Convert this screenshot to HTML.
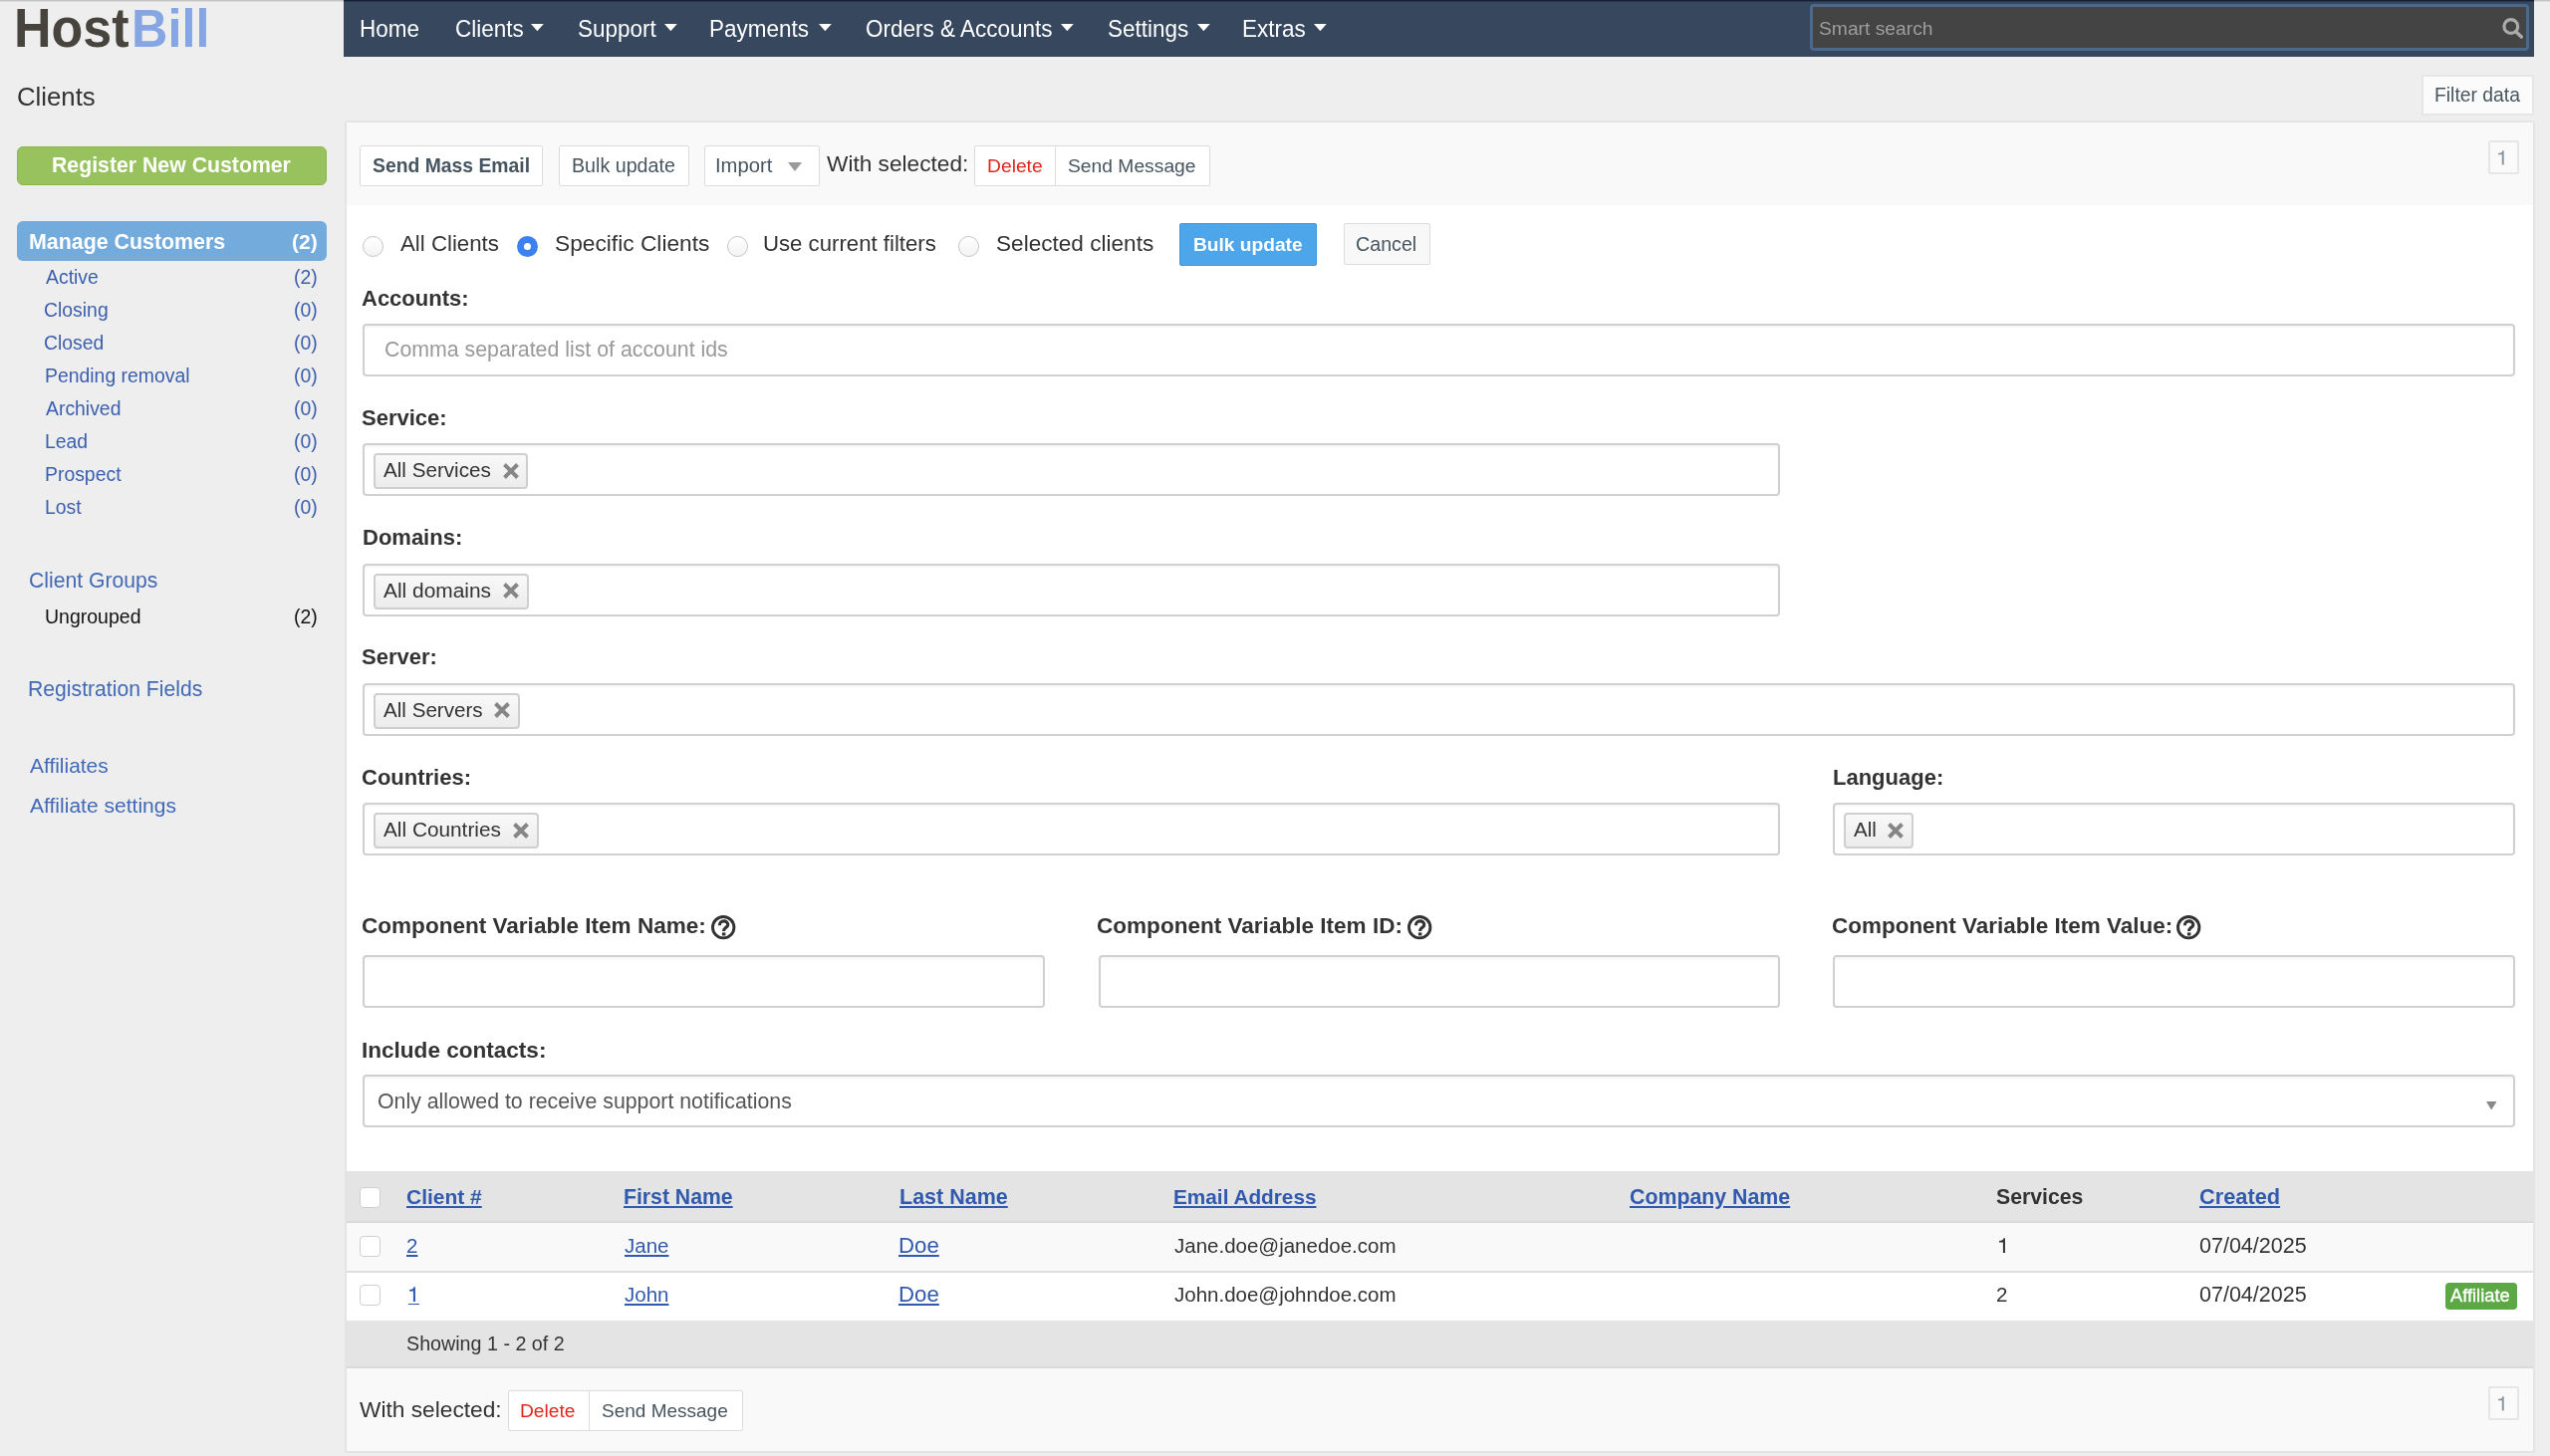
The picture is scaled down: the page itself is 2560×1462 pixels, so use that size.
<!DOCTYPE html>
<html><head><meta charset="utf-8"><title>HostBill - Clients</title>
<style>
html,body{margin:0;padding:0;}
body{width:2560px;height:1462px;position:relative;overflow:hidden;background:#eeeeee;font-family:"Liberation Sans",sans-serif;}
.t{position:absolute;white-space:nowrap;font-family:"Liberation Sans",sans-serif;will-change:transform;}
.u{text-decoration:underline;text-decoration-thickness:2px;text-underline-offset:2px;}
.btn{position:absolute;box-sizing:border-box;background:#fff;border:1px solid #dcdcdc;border-radius:2px;}
.inp{position:absolute;box-sizing:border-box;background:#fff;border:2px solid #d0d0d0;border-radius:4px;box-shadow:inset 0 2px 2px rgba(0,0,0,0.04);}
.tag{position:absolute;box-sizing:border-box;border:2px solid #cfcfcf;border-radius:4px;background:linear-gradient(#f9f9f9,#ececec);}
.radio{position:absolute;box-sizing:border-box;width:21px;height:21px;border-radius:50%;border:1px solid #c4c4c4;background:linear-gradient(#ffffff,#f3f3f3);}
.chk{position:absolute;box-sizing:border-box;width:21px;height:21px;border-radius:4px;border:1px solid #cfcfcf;background:#fff;}

</style></head>
<body>
<div style="position:absolute;left:0px;top:0px;width:2560px;height:1px;background:#c2c2c2;"></div>
<div style="position:absolute;left:0px;top:1px;width:2560px;height:1px;background:#dcdcdc;"></div>
<div style="position:absolute;left:345px;top:0px;width:2199px;height:57px;background:#36475e;"></div>
<div style="position:absolute;left:345px;top:0px;width:2199px;height:1px;background:#142139;"></div>
<div style="position:absolute;left:345px;top:1px;width:2199px;height:1px;background:#27364c;"></div>
<svg style="position:absolute;left:533.0px;top:23.8px" width="13" height="7.2" viewBox="0 0 13 7.2"><path d="M0 0H12.8L6.4 7.2Z" fill="#fff"/></svg>
<svg style="position:absolute;left:667.0px;top:23.8px" width="13" height="7.2" viewBox="0 0 13 7.2"><path d="M0 0H12.8L6.4 7.2Z" fill="#fff"/></svg>
<svg style="position:absolute;left:821.5px;top:23.8px" width="13" height="7.2" viewBox="0 0 13 7.2"><path d="M0 0H12.8L6.4 7.2Z" fill="#fff"/></svg>
<svg style="position:absolute;left:1064.8px;top:23.8px" width="13" height="7.2" viewBox="0 0 13 7.2"><path d="M0 0H12.8L6.4 7.2Z" fill="#fff"/></svg>
<svg style="position:absolute;left:1202.2px;top:23.8px" width="13" height="7.2" viewBox="0 0 13 7.2"><path d="M0 0H12.8L6.4 7.2Z" fill="#fff"/></svg>
<svg style="position:absolute;left:1319.3999999999999px;top:23.8px" width="13" height="7.2" viewBox="0 0 13 7.2"><path d="M0 0H12.8L6.4 7.2Z" fill="#fff"/></svg>
<div style="position:absolute;left:1817px;top:4px;width:722px;height:47px;box-sizing:border-box;background:#444444;border:3.5px solid #4a698b;border-radius:4px;"></div>
<svg style="position:absolute;left:2508px;top:14px" width="28" height="28" viewBox="0 0 28 28"><circle cx="12.8" cy="12.5" r="6.9" fill="none" stroke="#ababab" stroke-width="3.2"/><line x1="18" y1="18" x2="23.3" y2="23" stroke="#ababab" stroke-width="3.4" stroke-linecap="round"/></svg>
<div style="position:absolute;left:17px;top:147px;width:311px;height:38.5px;box-sizing:border-box;background:#98c25e;border:1px solid #8ab651;border-radius:6px;"></div>
<div style="position:absolute;left:17px;top:222px;width:311px;height:40px;background:#73abdd;border-radius:6px;"></div>
<div class="btn" style="left:2431px;top:74.5px;width:113px;height:41px;background:#fbfbfb;border:2px solid #e6e6e6;border-radius:2px;"></div>
<div style="position:absolute;left:346px;top:121px;width:2199px;height:1338px;box-sizing:border-box;background:#ffffff;border:2px solid #e4e4e4;border-radius:3px;"></div>
<div style="position:absolute;left:348px;top:123px;width:2195px;height:83px;background:#f9f9f9;"></div>
<div class="btn" style="left:361px;top:146px;width:184px;height:41px;"></div>
<div class="btn" style="left:560.5px;top:146px;width:131px;height:41px;"></div>
<div class="btn" style="left:707px;top:146px;width:116px;height:41px;"></div>
<div style="position:absolute;left:791px;top:163px;width:0;height:0;border-left:7px solid transparent;border-right:7px solid transparent;border-top:9px solid #9a9a9a;"></div>
<div class="btn" style="left:978px;top:146px;width:82px;height:41px;border-radius:2px 0 0 2px;"></div>
<div class="btn" style="left:1059px;top:146px;width:156px;height:41px;border-radius:0 2px 2px 0;"></div>
<div class="btn" style="left:2497.5px;top:141px;width:31px;height:34px;border:2px solid #e6e6e6;border-radius:2px;background:#fafafa;"></div>
<svg style="position:absolute;left:2508.4px;top:149.544px;overflow:visible" width="7.728" height="15.456" viewBox="0 -16 8 16"><path d="M3.9 0H5.95V-14.8H4.45C4.15 -12.9 2.7 -12.1 0 -12.1V-10.45H3.9Z" fill="#8a959e"/></svg>
<div class="radio" style="left:364px;top:237px;"></div>
<div class="radio" style="left:730.4px;top:237px;"></div>
<div class="radio" style="left:962.4px;top:237px;"></div>
<div class="radio" style="left:519px;top:237px;border:none;background:#3b82f0;"><div style="position:absolute;left:7px;top:7px;width:7px;height:7px;border-radius:50%;background:#fff;"></div></div>
<div style="position:absolute;left:1184px;top:224px;width:137.5px;height:42.5px;box-sizing:border-box;background:#4ea6ea;border:1px solid #3f97dc;border-radius:2px;"></div>
<div class="btn" style="left:1348.5px;top:224px;width:87px;height:42px;background:#f8f8f8;"></div>
<div class="inp" style="left:364px;top:325px;width:2161px;height:53px;"></div>
<div class="inp" style="left:364px;top:445px;width:1422.5px;height:53px;"></div>
<div class="tag" style="left:375px;top:455px;width:155.39999999999998px;height:36px;"></div>
<svg style="position:absolute;left:504.59999999999997px;top:464.8px" width="16" height="16" viewBox="0 0 16 16"><path d="M1.5 1.5L14.5 14.5M14.5 1.5L1.5 14.5" stroke="#868686" stroke-width="4" stroke-linecap="butt"/></svg>
<div class="inp" style="left:364px;top:565.5px;width:1422.5px;height:53px;"></div>
<div class="tag" style="left:375px;top:575.5px;width:156.20000000000005px;height:36px;"></div>
<svg style="position:absolute;left:505.40000000000003px;top:585.3px" width="16" height="16" viewBox="0 0 16 16"><path d="M1.5 1.5L14.5 14.5M14.5 1.5L1.5 14.5" stroke="#868686" stroke-width="4" stroke-linecap="butt"/></svg>
<div class="inp" style="left:364px;top:685.5px;width:2161px;height:53px;"></div>
<div class="tag" style="left:375px;top:695.5px;width:146.60000000000002px;height:36px;"></div>
<svg style="position:absolute;left:495.8px;top:705.3px" width="16" height="16" viewBox="0 0 16 16"><path d="M1.5 1.5L14.5 14.5M14.5 1.5L1.5 14.5" stroke="#868686" stroke-width="4" stroke-linecap="butt"/></svg>
<div class="inp" style="left:364px;top:806px;width:1422.5px;height:53px;"></div>
<div class="tag" style="left:375px;top:816px;width:165.89999999999998px;height:36px;"></div>
<svg style="position:absolute;left:515.1px;top:825.8px" width="16" height="16" viewBox="0 0 16 16"><path d="M1.5 1.5L14.5 14.5M14.5 1.5L1.5 14.5" stroke="#868686" stroke-width="4" stroke-linecap="butt"/></svg>
<div class="inp" style="left:1840px;top:806px;width:685px;height:53px;"></div>
<div class="tag" style="left:1851px;top:816px;width:70px;height:36px;"></div>
<svg style="position:absolute;left:1895.2px;top:825.8px" width="16" height="16" viewBox="0 0 16 16"><path d="M1.5 1.5L14.5 14.5M14.5 1.5L1.5 14.5" stroke="#868686" stroke-width="4" stroke-linecap="butt"/></svg>
<svg style="position:absolute;left:714px;top:918.5px" width="25" height="25" viewBox="0 0 25 25"><circle cx="12.2" cy="12.2" r="10.7" fill="none" stroke="#333" stroke-width="2.9"/><path d="M8.4 10.2C8.4 7.4 10.2 5.9 12.6 5.9C15 5.9 16.8 7.3 16.8 9.4C16.8 11.4 15.2 12 14 12.9C13 13.6 12.6 14.3 12.6 15.9" fill="none" stroke="#333" stroke-width="3.1"/><rect x="10.9" y="17.4" width="3.5" height="3.1" fill="#333"/></svg>
<svg style="position:absolute;left:1412.5px;top:918.5px" width="25" height="25" viewBox="0 0 25 25"><circle cx="12.2" cy="12.2" r="10.7" fill="none" stroke="#333" stroke-width="2.9"/><path d="M8.4 10.2C8.4 7.4 10.2 5.9 12.6 5.9C15 5.9 16.8 7.3 16.8 9.4C16.8 11.4 15.2 12 14 12.9C13 13.6 12.6 14.3 12.6 15.9" fill="none" stroke="#333" stroke-width="3.1"/><rect x="10.9" y="17.4" width="3.5" height="3.1" fill="#333"/></svg>
<svg style="position:absolute;left:2184.5px;top:918.5px" width="25" height="25" viewBox="0 0 25 25"><circle cx="12.2" cy="12.2" r="10.7" fill="none" stroke="#333" stroke-width="2.9"/><path d="M8.4 10.2C8.4 7.4 10.2 5.9 12.6 5.9C15 5.9 16.8 7.3 16.8 9.4C16.8 11.4 15.2 12 14 12.9C13 13.6 12.6 14.3 12.6 15.9" fill="none" stroke="#333" stroke-width="3.1"/><rect x="10.9" y="17.4" width="3.5" height="3.1" fill="#333"/></svg>
<div class="inp" style="left:364px;top:959px;width:685px;height:53px;"></div>
<div class="inp" style="left:1102.5px;top:959px;width:684px;height:53px;"></div>
<div class="inp" style="left:1840px;top:959px;width:685px;height:53px;"></div>
<div class="inp" style="left:364px;top:1079px;width:2161px;height:53px;"></div>
<svg style="position:absolute;left:2495.5px;top:1105.5px" width="10.5" height="8.6" viewBox="0 0 10.5 8.6"><path d="M0 0H10.4L5.2 8.6Z" fill="#888"/></svg>
<div style="position:absolute;left:348px;top:1176px;width:2195px;height:50px;background:#e4e4e4;"></div>
<div style="position:absolute;left:348px;top:1226px;width:2195px;height:2px;background:#d9d9d9;"></div>
<div style="position:absolute;left:348px;top:1228px;width:2195px;height:48px;background:#f9f9f9;"></div>
<div style="position:absolute;left:348px;top:1276px;width:2195px;height:1.5px;background:#dedede;"></div>
<div style="position:absolute;left:348px;top:1277.5px;width:2195px;height:48.0px;background:#ffffff;"></div>
<div style="position:absolute;left:348px;top:1325.5px;width:2195px;height:47.5px;background:#e4e4e4;"></div>
<div style="position:absolute;left:348px;top:1372px;width:2195px;height:2px;background:#dadada;"></div>
<div style="position:absolute;left:348px;top:1374px;width:2195px;height:83px;background:#f9f9f9;"></div>
<div class="chk" style="left:361px;top:1192px;"></div>
<div class="chk" style="left:361px;top:1241px;"></div>
<div class="chk" style="left:361px;top:1289.5px;"></div>
<svg style="position:absolute;left:2006.8px;top:1242.1px;overflow:visible" width="8.0" height="16.0" viewBox="0 -16 8 16"><path d="M3.9 0H5.95V-14.8H4.45C4.15 -12.9 2.7 -12.1 0 -12.1V-10.45H3.9Z" fill="#333333"/></svg>
<svg style="position:absolute;left:411.1px;top:1290.6px;overflow:visible" width="8.0" height="16.0" viewBox="0 -16 8 16"><path d="M3.9 0H5.95V-14.8H4.45C4.15 -12.9 2.7 -12.1 0 -12.1V-10.45H3.9Z" fill="#3159ae"/></svg>
<div style="position:absolute;left:409.6px;top:1308.6px;width:11.199999999999989px;height:1.7999999999999545px;background:#3159ae;"></div>
<div style="position:absolute;left:2455px;top:1288px;width:72px;height:27px;background:#5ba845;border-radius:4px;"></div>
<div class="btn" style="left:509.5px;top:1396px;width:82px;height:41px;border-radius:2px 0 0 2px;"></div>
<div class="btn" style="left:590.5px;top:1396px;width:155px;height:41px;border-radius:0 2px 2px 0;"></div>
<div class="btn" style="left:2497.5px;top:1392px;width:31px;height:34px;border:2px solid #e6e6e6;border-radius:2px;background:#fafafa;"></div>
<svg style="position:absolute;left:2508.4px;top:1400.544px;overflow:visible" width="7.728" height="15.456" viewBox="0 -16 8 16"><path d="M3.9 0H5.95V-14.8H4.45C4.15 -12.9 2.7 -12.1 0 -12.1V-10.45H3.9Z" fill="#8a959e"/></svg>
<div class="t " style="left:14.00px;top:0.29999999999999716px;font-size:52.00px;line-height:58px;font-weight:700;color:#47443e;transform:scaleY(1.08);transform-origin:0 46px;">Host</div>
<div class="t " style="left:131.58px;top:1.2999999999999972px;font-size:50.43px;line-height:57px;font-weight:700;color:#86a6e3;transform:scaleY(1.08);transform-origin:0 46px;">Bill</div>
<div class="t " style="left:361.36px;top:17px;font-size:22.50px;line-height:25px;font-weight:400;color:#ffffff;transform:scaleY(1.1);transform-origin:0 20px;">Home</div>
<div class="t " style="left:457.00px;top:17px;font-size:22.50px;line-height:25px;font-weight:400;color:#ffffff;transform:scaleY(1.1);transform-origin:0 20px;">Clients</div>
<div class="t " style="left:579.96px;top:17px;font-size:22.50px;line-height:25px;font-weight:400;color:#ffffff;transform:scaleY(1.1);transform-origin:0 20px;">Support</div>
<div class="t " style="left:712.28px;top:17px;font-size:22.50px;line-height:25px;font-weight:400;color:#ffffff;transform:scaleY(1.1);transform-origin:0 20px;">Payments</div>
<div class="t " style="left:868.58px;top:17px;font-size:22.50px;line-height:25px;font-weight:400;color:#ffffff;transform:scaleY(1.1);transform-origin:0 20px;">Orders &amp; Accounts</div>
<div class="t " style="left:1112.04px;top:17px;font-size:22.50px;line-height:25px;font-weight:400;color:#ffffff;transform:scaleY(1.1);transform-origin:0 20px;">Settings</div>
<div class="t " style="left:1247.24px;top:17px;font-size:22.50px;line-height:25px;font-weight:400;color:#ffffff;transform:scaleY(1.1);transform-origin:0 20px;">Extras</div>
<div class="t " style="left:1825.72px;top:18px;font-size:19.28px;line-height:21px;font-weight:400;color:#9d9d9d;">Smart search</div>
<div class="t " style="left:17.00px;top:82.6px;font-size:25.76px;line-height:28px;font-weight:400;color:#333333;">Clients</div>
<div class="t " style="left:52.46px;top:154.3px;font-size:21.27px;line-height:24px;font-weight:700;color:#ffffff;">Register New Customer</div>
<div class="t " style="left:29.00px;top:231px;font-size:21.39px;line-height:24px;font-weight:700;color:#ffffff;">Manage Customers</div>
<div class="t " style="left:293.33px;top:231px;font-size:21.00px;line-height:23px;font-weight:700;color:#ffffff;">(2)</div>
<div class="t " style="left:45.92px;top:267px;font-size:19.40px;line-height:22px;font-weight:400;color:#3b5fae;">Active</div>
<div class="t " style="left:294.76px;top:267px;font-size:19.40px;line-height:22px;font-weight:400;color:#3b5fae;">(2)</div>
<div class="t " style="left:44.32px;top:300px;font-size:19.40px;line-height:22px;font-weight:400;color:#3b5fae;">Closing</div>
<div class="t " style="left:294.76px;top:300px;font-size:19.40px;line-height:22px;font-weight:400;color:#3b5fae;">(0)</div>
<div class="t " style="left:44.32px;top:333px;font-size:19.40px;line-height:22px;font-weight:400;color:#3b5fae;">Closed</div>
<div class="t " style="left:294.76px;top:333px;font-size:19.40px;line-height:22px;font-weight:400;color:#3b5fae;">(0)</div>
<div class="t " style="left:44.92px;top:366px;font-size:19.40px;line-height:22px;font-weight:400;color:#3b5fae;">Pending removal</div>
<div class="t " style="left:294.76px;top:366px;font-size:19.40px;line-height:22px;font-weight:400;color:#3b5fae;">(0)</div>
<div class="t " style="left:45.92px;top:399px;font-size:19.40px;line-height:22px;font-weight:400;color:#3b5fae;">Archived</div>
<div class="t " style="left:294.76px;top:399px;font-size:19.40px;line-height:22px;font-weight:400;color:#3b5fae;">(0)</div>
<div class="t " style="left:44.92px;top:432px;font-size:19.40px;line-height:22px;font-weight:400;color:#3b5fae;">Lead</div>
<div class="t " style="left:294.76px;top:432px;font-size:19.40px;line-height:22px;font-weight:400;color:#3b5fae;">(0)</div>
<div class="t " style="left:44.92px;top:465px;font-size:19.40px;line-height:22px;font-weight:400;color:#3b5fae;">Prospect</div>
<div class="t " style="left:294.76px;top:465px;font-size:19.40px;line-height:22px;font-weight:400;color:#3b5fae;">(0)</div>
<div class="t " style="left:44.92px;top:498px;font-size:19.40px;line-height:22px;font-weight:400;color:#3b5fae;">Lost</div>
<div class="t " style="left:294.76px;top:498px;font-size:19.40px;line-height:22px;font-weight:400;color:#3b5fae;">(0)</div>
<div class="t " style="left:29.04px;top:570.7px;font-size:21.18px;line-height:23px;font-weight:400;color:#4169b5;">Client Groups</div>
<div class="t " style="left:45.00px;top:607.8px;font-size:19.50px;line-height:22px;font-weight:400;color:#111111;">Ungrouped</div>
<div class="t " style="left:294.76px;top:607.8px;font-size:19.40px;line-height:22px;font-weight:400;color:#111111;">(2)</div>
<div class="t " style="left:28.24px;top:680px;font-size:21.18px;line-height:23px;font-weight:400;color:#4169b5;">Registration Fields</div>
<div class="t " style="left:30.04px;top:756.6px;font-size:20.93px;line-height:23px;font-weight:400;color:#4169b5;">Affiliates</div>
<div class="t " style="left:30.04px;top:796.8px;font-size:21.06px;line-height:23px;font-weight:400;color:#4169b5;">Affiliate settings</div>
<div class="t " style="left:2443.96px;top:85px;font-size:19.32px;line-height:21px;font-weight:400;color:#46555f;">Filter data</div>
<div class="t " style="left:374.20px;top:155px;font-size:19.35px;line-height:22px;font-weight:700;color:#46555f;">Send Mass Email</div>
<div class="t " style="left:574.00px;top:155px;font-size:19.66px;line-height:22px;font-weight:400;color:#46555f;">Bulk update</div>
<div class="t " style="left:718.32px;top:155px;font-size:20.24px;line-height:22px;font-weight:400;color:#46555f;">Import</div>
<div class="t " style="left:830.00px;top:151px;font-size:22.66px;line-height:26px;font-weight:400;color:#333333;">With selected:</div>
<div class="t " style="left:991.08px;top:156px;font-size:19.28px;line-height:21px;font-weight:400;color:#e0281e;">Delete</div>
<div class="t " style="left:1072.32px;top:156px;font-size:19.27px;line-height:21px;font-weight:400;color:#46555f;">Send Message</div>
<div class="t " style="left:402.08px;top:232.4px;font-size:22.25px;line-height:25px;font-weight:400;color:#333333;">All Clients</div>
<div class="t " style="left:556.92px;top:231.4px;font-size:22.74px;line-height:26px;font-weight:400;color:#333333;">Specific Clients</div>
<div class="t " style="left:766.32px;top:232.4px;font-size:22.20px;line-height:25px;font-weight:400;color:#333333;">Use current filters</div>
<div class="t " style="left:999.92px;top:232.4px;font-size:22.60px;line-height:25px;font-weight:400;color:#333333;">Selected clients</div>
<div class="t " style="left:1197.92px;top:235px;font-size:19.16px;line-height:21px;font-weight:700;color:#ffffff;">Bulk update</div>
<div class="t " style="left:1361.00px;top:234px;font-size:19.68px;line-height:22px;font-weight:400;color:#46555f;">Cancel</div>
<div class="t " style="left:363.28px;top:286.6px;font-size:22.00px;line-height:25px;font-weight:700;color:#333333;">Accounts:</div>
<div class="t " style="left:386.08px;top:339px;font-size:21.32px;line-height:24px;font-weight:400;color:#999999;">Comma separated list of account ids</div>
<div class="t " style="left:363.32px;top:407px;font-size:22.00px;line-height:25px;font-weight:700;color:#333333;">Service:</div>
<div class="t " style="left:385.46px;top:460px;font-size:20.65px;line-height:23px;font-weight:400;color:#333333;">All Services</div>
<div class="t " style="left:363.92px;top:527.2px;font-size:22.00px;line-height:25px;font-weight:700;color:#333333;">Domains:</div>
<div class="t " style="left:385.46px;top:580.5px;font-size:20.92px;line-height:23px;font-weight:400;color:#333333;">All domains</div>
<div class="t " style="left:363.32px;top:647.3px;font-size:22.00px;line-height:25px;font-weight:700;color:#333333;">Server:</div>
<div class="t " style="left:385.46px;top:700.5px;font-size:20.62px;line-height:23px;font-weight:400;color:#333333;">All Servers</div>
<div class="t " style="left:363.32px;top:767.5px;font-size:22.00px;line-height:25px;font-weight:700;color:#333333;">Countries:</div>
<div class="t " style="left:385.46px;top:821px;font-size:20.81px;line-height:23px;font-weight:400;color:#333333;">All Countries</div>
<div class="t " style="left:1839.92px;top:767.5px;font-size:22.00px;line-height:25px;font-weight:700;color:#333333;">Language:</div>
<div class="t " style="left:1861.46px;top:821px;font-size:20.61px;line-height:23px;font-weight:400;color:#333333;">All</div>
<div class="t " style="left:363.28px;top:916.8px;font-size:22.56px;line-height:25px;font-weight:700;color:#333333;">Component Variable Item Name:</div>
<div class="t " style="left:1101.32px;top:916.8px;font-size:22.56px;line-height:25px;font-weight:700;color:#333333;">Component Variable Item ID:</div>
<div class="t " style="left:1839.20px;top:916.8px;font-size:22.47px;line-height:25px;font-weight:700;color:#333333;">Component Variable Item Value:</div>
<div class="t " style="left:363.08px;top:1041.5px;font-size:22.55px;line-height:25px;font-weight:700;color:#333333;">Include contacts:</div>
<div class="t " style="left:379.00px;top:1094px;font-size:21.32px;line-height:24px;font-weight:400;color:#555555;">Only allowed to receive support notifications</div>
<div class="t u" style="left:408.36px;top:1190.2px;font-size:20.98px;line-height:23px;font-weight:700;color:#3159ae;">Client #</div>
<div class="t u" style="left:626.04px;top:1190.2px;font-size:21.21px;line-height:23px;font-weight:700;color:#3159ae;">First Name</div>
<div class="t u" style="left:903.08px;top:1190.2px;font-size:21.51px;line-height:24px;font-weight:700;color:#3159ae;">Last Name</div>
<div class="t u" style="left:1178.08px;top:1190.2px;font-size:20.78px;line-height:23px;font-weight:700;color:#3159ae;">Email Address</div>
<div class="t u" style="left:1636.24px;top:1190.2px;font-size:21.34px;line-height:24px;font-weight:700;color:#3159ae;">Company Name</div>
<div class="t " style="left:2004.24px;top:1190.2px;font-size:21.23px;line-height:24px;font-weight:700;color:#333333;">Services</div>
<div class="t u" style="left:2208.32px;top:1189.2px;font-size:21.77px;line-height:25px;font-weight:700;color:#3159ae;">Created</div>
<div class="t u" style="left:408.08px;top:1239.1px;font-size:20.50px;line-height:23px;font-weight:400;color:#3159ae;">2</div>
<div class="t u" style="left:627.46px;top:1239.1px;font-size:20.50px;line-height:23px;font-weight:400;color:#3159ae;">Jane</div>
<div class="t u" style="left:902.28px;top:1238.1px;font-size:22.25px;line-height:25px;font-weight:400;color:#3159ae;">Doe</div>
<div class="t " style="left:1179.08px;top:1239.1px;font-size:20.50px;line-height:23px;font-weight:400;color:#333333;">Jane.doe@janedoe.com</div>
<div class="t " style="left:2208.32px;top:1239.1px;font-size:21.51px;line-height:24px;font-weight:400;color:#333333;">07/04/2025</div>
<div class="t u" style="left:627.46px;top:1287.6px;font-size:20.50px;line-height:23px;font-weight:400;color:#3159ae;">John</div>
<div class="t u" style="left:902.28px;top:1286.6px;font-size:22.25px;line-height:25px;font-weight:400;color:#3159ae;">Doe</div>
<div class="t " style="left:1179.08px;top:1287.6px;font-size:20.50px;line-height:23px;font-weight:400;color:#333333;">John.doe@johndoe.com</div>
<div class="t " style="left:2004.04px;top:1287.6px;font-size:20.50px;line-height:23px;font-weight:400;color:#333333;">2</div>
<div class="t " style="left:2208.32px;top:1287.6px;font-size:21.51px;line-height:24px;font-weight:400;color:#333333;">07/04/2025</div>
<div class="t " style="left:2460.24px;top:1290px;font-size:18.31px;line-height:21px;font-weight:400;color:#ffffff;-webkit-text-stroke:0.35px #fff;">Affiliate</div>
<div class="t " style="left:408.28px;top:1338.3px;font-size:19.70px;line-height:22px;font-weight:400;color:#333333;">Showing 1 - 2 of 2</div>
<div class="t " style="left:361.00px;top:1401.5px;font-size:22.72px;line-height:26px;font-weight:400;color:#333333;">With selected:</div>
<div class="t " style="left:521.96px;top:1406.3px;font-size:19.19px;line-height:21px;font-weight:400;color:#e0281e;">Delete</div>
<div class="t " style="left:603.70px;top:1406.3px;font-size:19.00px;line-height:21px;font-weight:400;color:#46555f;">Send Message</div>
</body></html>
